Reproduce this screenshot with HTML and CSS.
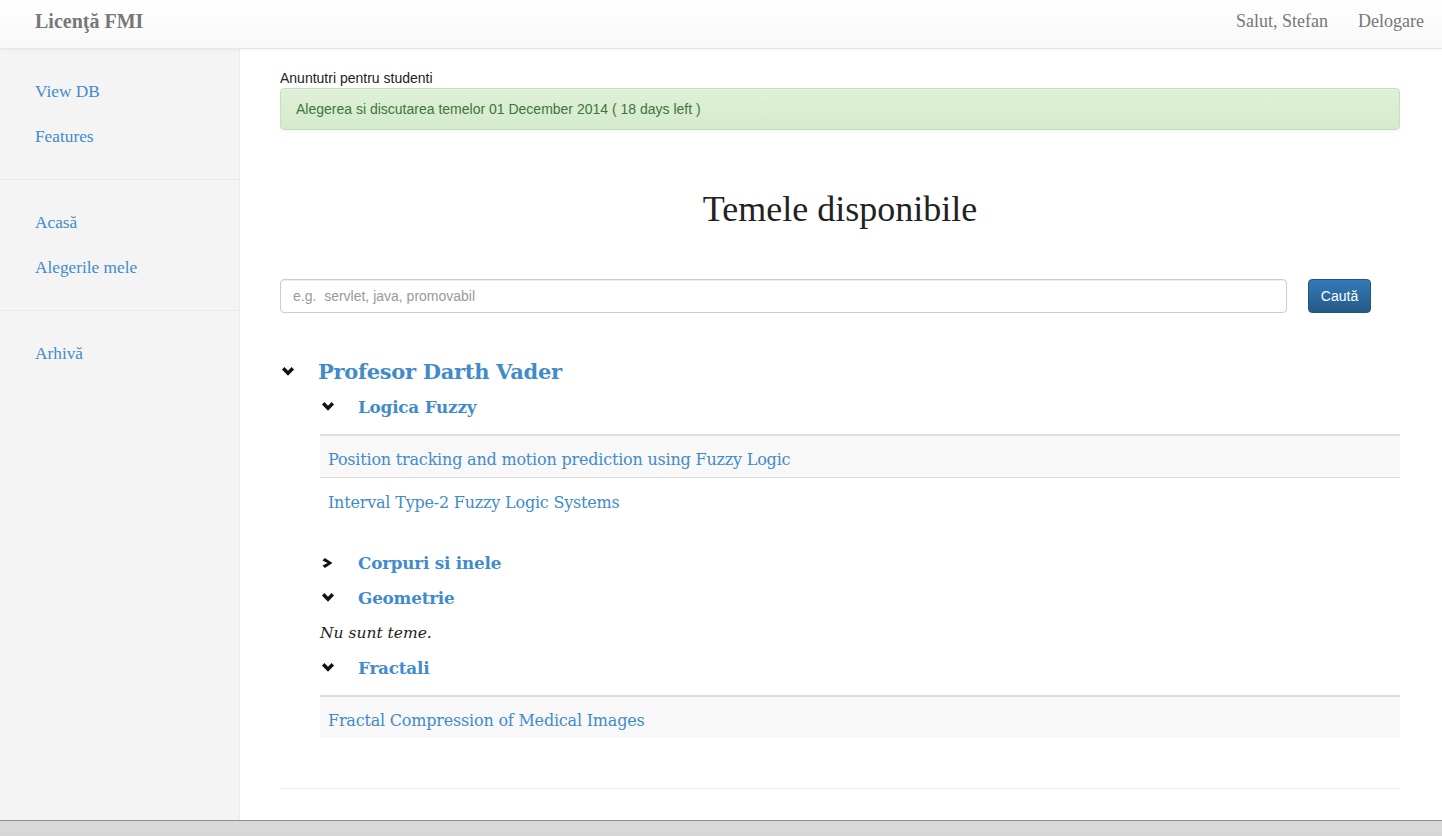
FILE: index.html
```html
<!DOCTYPE html>
<html lang="ro">
<head>
<meta charset="utf-8">
<title>Licenţă FMI</title>
<link rel="stylesheet" href="styles.css">
</head>
<body>
<div class="page">
  <header class="navbar">
    <a class="brand" href="#">Licenţă FMI</a>
    <nav class="nav-right">
      <a href="#">Salut, Stefan</a>
      <a href="#">Delogare</a>
    </nav>
  </header>
  <div class="layout">
    <aside class="sidebar">
      <ul class="side-group">
        <li><a href="#">View DB</a></li>
        <li><a href="#">Features</a></li>
      </ul>
      <ul class="side-group">
        <li><a href="#">Acasă</a></li>
        <li><a href="#">Alegerile mele</a></li>
      </ul>
      <ul class="side-group">
        <li><a href="#">Arhivă</a></li>
      </ul>
    </aside>
    <main class="main">
      <div class="announce-label">Anuntutri pentru studenti</div>
      <div class="alert">Alegerea si discutarea temelor 01 December 2014 ( 18 days left )</div>
      <h1 class="title">Temele disponibile</h1>
      <form class="search">
        <input class="search-input" type="text" placeholder="e.g.  servlet, java, promovabil">
        <button class="btn" type="button">Caută</button>
      </form>

      <div class="tree">
        <div class="row prof">
          <span class="chev"><svg width="12" height="9" viewBox="0 0 12 9"><path d="M0 2.5 L2.4 0 L6 3.7 L9.6 0 L12 2.5 L6 8.8 Z"/></svg></span>
          <a href="#">Profesor Darth Vader</a>
        </div>
        <div class="sub">
          <div class="row cat">
            <span class="chev"><svg width="12" height="9" viewBox="0 0 12 9"><path d="M0 2.5 L2.4 0 L6 3.7 L9.6 0 L12 2.5 L6 8.8 Z"/></svg></span>
            <a href="#">Logica Fuzzy</a>
          </div>
          <table class="topics">
            <tr class="striped"><td><a href="#">Position tracking and motion prediction using Fuzzy Logic</a></td></tr>
            <tr><td><a href="#">Interval Type-2 Fuzzy Logic Systems</a></td></tr>
          </table>
          <div class="row cat">
            <span class="chev"><svg width="11" height="10" viewBox="0 0 11 10"><path d="M0.5 2.4 L2.8 0 L10.5 5 L2.8 10 L0.5 7.6 L5.6 5 Z"/></svg></span>
            <a href="#">Corpuri si inele</a>
          </div>
          <div class="row cat">
            <span class="chev"><svg width="12" height="9" viewBox="0 0 12 9"><path d="M0 2.5 L2.4 0 L6 3.7 L9.6 0 L12 2.5 L6 8.8 Z"/></svg></span>
            <a href="#">Geometrie</a>
          </div>
          <div class="row empty"><em>Nu sunt teme.</em></div>
          <div class="row cat">
            <span class="chev"><svg width="12" height="9" viewBox="0 0 12 9"><path d="M0 2.5 L2.4 0 L6 3.7 L9.6 0 L12 2.5 L6 8.8 Z"/></svg></span>
            <a href="#">Fractali</a>
          </div>
          <table class="topics last">
            <tr class="striped"><td><a href="#">Fractal Compression of Medical Images</a></td></tr>
          </table>
        </div>
      </div>
      <hr class="rule">
    </main>
  </div>
  <div class="statusbar"></div>
</div>
</body>
</html>
```
FILE: styles.css
```css
* { box-sizing: border-box; }
html, body { margin: 0; padding: 0; }
body {
  font-family: "Liberation Serif", "Times New Roman", serif;
  color: #333;
  background: #fff;
}
a { text-decoration: none; color: #428bca; }

.page {
  height: 836px;
  display: flex;
  flex-direction: column;
  overflow: hidden;
}

.navbar {
  height: 49px;
  flex: none;
  display: flex;
  align-items: center;
  justify-content: space-between;
  padding: 0 18px 5px 35px;
  background: linear-gradient(#ffffff, #f8f8f8);
  border-bottom: 1px solid #e7e7e7;
  box-shadow: 0 1px 3px rgba(0,0,0,0.05);
  position: relative;
  z-index: 1;
}
.brand {
  font-weight: bold;
  font-size: 20px;
  color: #777;
}
.nav-right { display: flex; gap: 30px; }
.nav-right a { color: #777; font-size: 18px; }

.layout {
  flex: 1;
  display: flex;
  min-height: 0;
}

.sidebar {
  width: 240px;
  flex: none;
  background: #f4f4f4;
  border-right: 1px solid #ebebeb;
}
.side-group {
  list-style: none;
  margin: 0;
  padding: 20px 0;
  border-bottom: 1px solid #e8e8e8;
}
.side-group:last-child { border-bottom: 0; }
.side-group li a {
  display: block;
  height: 45px;
  line-height: 45px;
  padding-left: 35px;
  font-size: 17.3px;
}

.main {
  flex: 1;
  padding: 19px 42px 0 40px;
  min-width: 0;
}
.announce-label {
  font-family: "Liberation Sans", Arial, sans-serif;
  font-size: 14px;
  line-height: 20px;
  color: #222;
  margin-bottom: 0;
}
.alert {
  font-family: "Liberation Sans", Arial, sans-serif;
  font-size: 14px;
  line-height: 20px;
  padding: 10px 15px;
  color: #3c763d;
  background: linear-gradient(#dff0d8, #d5ebcb);
  border: 1px solid #c3e3b5;
  border-radius: 4px;
  box-shadow: inset 0 1px 0 rgba(255,255,255,.25), 0 1px 2px rgba(0,0,0,.05);
}
.title {
  margin: 59px 0 0;
  text-align: center;
  font-weight: normal;
  font-size: 36px;
  line-height: 40px;
  color: #222;
}
.search {
  margin: 50px 0 0;
  display: flex;
  align-items: center;
  gap: 21px;
  padding-right: 29px;
}
.search-input {
  flex: 1;
  height: 34px;
  border: 1px solid #ccc;
  border-radius: 4px;
  padding: 6px 12px;
  font-family: "Liberation Sans", Arial, sans-serif;
  font-size: 14px;
  color: #555;
  box-shadow: inset 0 1px 1px rgba(0,0,0,.075);
}
.search-input::placeholder { color: #999; }
.btn {
  height: 34px;
  width: 63px;
  border: 1px solid #245580;
  border-radius: 4px;
  background: linear-gradient(#337ab7, #265a88);
  color: #fff;
  font-family: "Liberation Sans", Arial, sans-serif;
  font-size: 14px;
  padding: 0;
}

.tree { margin-top: 41px; }
.row {
  height: 35px;
  display: flex;
  align-items: center;
}
.chev {
  width: 38px;
  flex: none;
  padding-left: 2px;
  display: flex;
  align-items: center;
}
.chev svg { fill: #111; }
.prof a {
  font-family: "DejaVu Serif", Georgia, serif;
  font-weight: bold;
  font-size: 21px;
  letter-spacing: -0.3px;
}
.sub { padding-left: 40px; }
.cat a {
  font-family: "DejaVu Serif", Georgia, serif;
  font-weight: bold;
  font-size: 16.8px;
  letter-spacing: -0.2px;
}
.empty em {
  font-family: "DejaVu Serif", Georgia, serif;
  font-size: 15.5px;
  color: #222;
}
.topics {
  width: 100%;
  border-collapse: collapse;
  margin: 10px 0 24px;
}
.topics td {
  padding: 11px 8px 5px;
  height: 42px;
  border-top: 1px solid #ddd;
  font-family: "DejaVu Serif", Georgia, serif;
  font-size: 16px;
  letter-spacing: -0.2px;
}
.topics tr + tr td { height: 44px; }
.topics tr:first-child td { border-top: 2px solid #ddd; }
.topics .striped td { background: #f8f8f8; }

.rule {
  margin: 50px 0 0;
  border: 0;
  border-top: 1px solid #eee;
}

.statusbar {
  height: 16px;
  flex: none;
  background: linear-gradient(#dadada, #d6d6d6);
  border-top: 1px solid #8c8c8c;
}
```
